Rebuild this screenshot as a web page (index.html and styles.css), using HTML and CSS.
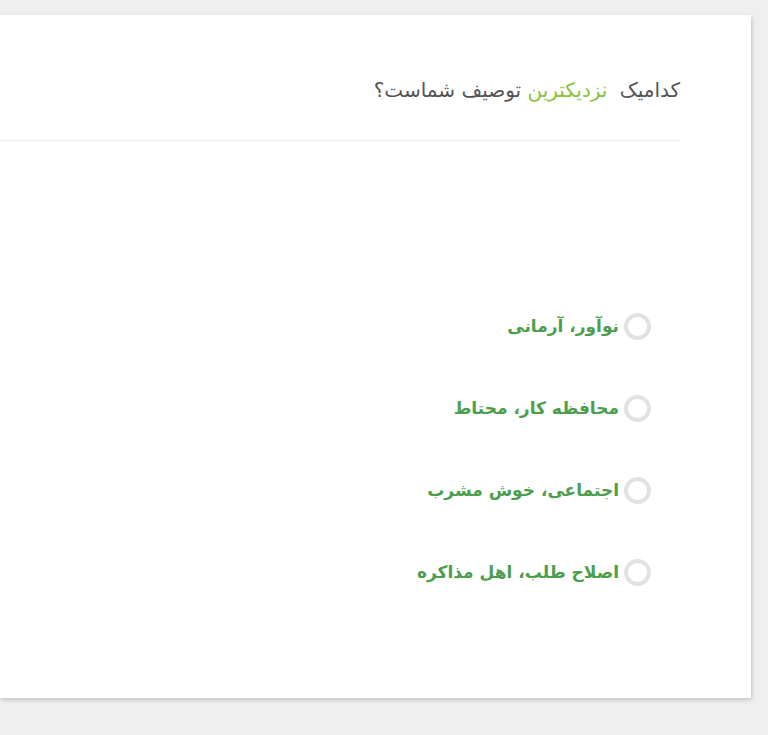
FILE: index.html
```html
<!DOCTYPE html>
<html lang="fa" dir="rtl">
<head>
<meta charset="utf-8">
<title>سوال</title>
<link rel="stylesheet" href="styles.css">
</head>
<body>
<div class="card">
  <div class="head">
    <h2 class="question">کدامیک <span class="hl">نزدیکترین</span> توصیف شماست؟</h2>
  </div>
  <ul class="options">
    <li class="option"><span class="radio"></span><span class="label">نوآور، آرمانی</span></li>
    <li class="option"><span class="radio"></span><span class="label">محافظه کار، محتاط</span></li>
    <li class="option"><span class="radio"></span><span class="label">اجتماعی، خوش مشرب</span></li>
    <li class="option"><span class="radio"></span><span class="label">اصلاح طلب، اهل مذاکره</span></li>
  </ul>
</div>
</body>
</html>
```
FILE: styles.css
```css
html, body {
  margin: 0;
  padding: 0;
  background: #efefef;
  height: 100%;
}
body {
  font-family: "DejaVu Sans", sans-serif;
  overflow: hidden;
}
.card {
  direction: rtl;
  margin-top: 15px;
  margin-right: 17px;
  height: 683px;
  background: #ffffff;
  box-shadow: 1px 2px 4px rgba(0,0,0,0.18);
  box-sizing: border-box;
  padding-right: 100px;
}
.head {
  margin-right: -29px;
  padding-top: 60px;
  height: 65px;
  border-bottom: 1px solid #ececec;
}
.question {
  margin: 0;
  font-size: 20px;
  font-weight: normal;
  color: #555555;
  line-height: 30px;
}
.hl {
  color: #8cc13f;
  margin: 0 6px 0 0;
}
.options {
  list-style: none;
  margin: 0;
  padding: 0;
  padding-top: 171px;
  display: flex;
  flex-direction: column;
  gap: 54px;
}
.option {
  display: flex;
  align-items: center;
  gap: 5px;
  height: 28px;
}
.radio {
  width: 19px;
  height: 19px;
  border: 4px solid #e2e2e2;
  border-radius: 50%;
  background: #fff;
  flex: none;
}
.label {
  font-size: 17px;
  font-weight: bold;
  color: #4c9e4c;
  line-height: 28px;
}
```
